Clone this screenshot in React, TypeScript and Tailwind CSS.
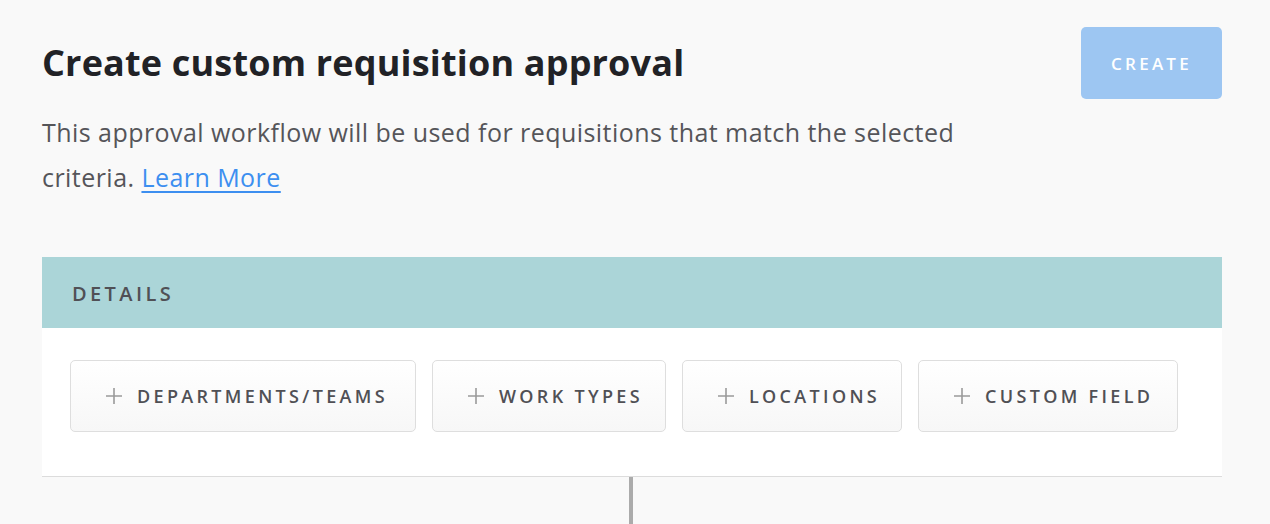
import React from "react";

const PlusIcon = () => (
  <svg width="18" height="18" viewBox="0 0 18 18" className="shrink-0">
    <path d="M9 1v16M1 9h16" stroke="#9a9a9a" strokeWidth="1.6" fill="none" />
  </svg>
);

const CriteriaButton = ({ label, width }: { label: string; width: string }) => (
  <button
    className={`flex h-[72px] items-center gap-[14px] overflow-hidden whitespace-nowrap rounded-[5px] border border-[#dedede] bg-gradient-to-b from-white to-[#f7f7f7] pl-[34px] ${width}`}
  >
    <PlusIcon />
    <span className="text-[18px] font-semibold tracking-[0.185em] text-[#505055]">{label}</span>
  </button>
);

export default function App() {
  return (
    <div
      className="min-h-[524px] w-full overflow-hidden bg-[#f9f9f9]"
      style={{ fontFamily: "'Open Sans', Lato, sans-serif" }}
    >
      <div className="ml-[42px] w-[1180px] pt-[27px]">
        <div className="flex items-center justify-between">
          <h1 className="text-[36px] font-bold leading-[72px] tracking-[0.005em] text-[#212226]">
            Create custom requisition approval
          </h1>
          <button className="h-[72px] w-[141px] rounded-[5px] bg-[#9dc6f2] pt-[2px] text-[17px] font-semibold tracking-[0.19em] text-white">
            CREATE
          </button>
        </div>
        <p className="mt-[11px] w-[930px] text-[25px] leading-[45px] tracking-[0.018em] text-[#555559]">
          This approval workflow will be used for requisitions that match the selected criteria.{" "}
          <a href="#" className="text-[#3d8ff0] underline underline-offset-[4px]">
            Learn More
          </a>
        </p>
        <div className="mt-[57px]">
          <div className="flex h-[71px] items-center bg-[#abd5d8] px-[30px] pt-[2px]">
            <span className="text-[20px] font-semibold tracking-[0.17em] text-[#505055]">DETAILS</span>
          </div>
          <div className="border-b border-[#dcdcdc] bg-white px-[28px] pt-[32px] pb-[44px]">
            <div className="flex gap-[16px]">
              <CriteriaButton label="DEPARTMENTS/TEAMS" width="w-[346px]" />
              <CriteriaButton label="WORK TYPES" width="w-[234px]" />
              <CriteriaButton label="LOCATIONS" width="w-[220px]" />
              <CriteriaButton label="CUSTOM FIELD" width="w-[260px]" />
            </div>
          </div>
          <div className="flex justify-center pr-[2px]">
            <div className="h-[60px] w-[4px] bg-[#ababab]" />
          </div>
        </div>
      </div>
    </div>
  );
}
